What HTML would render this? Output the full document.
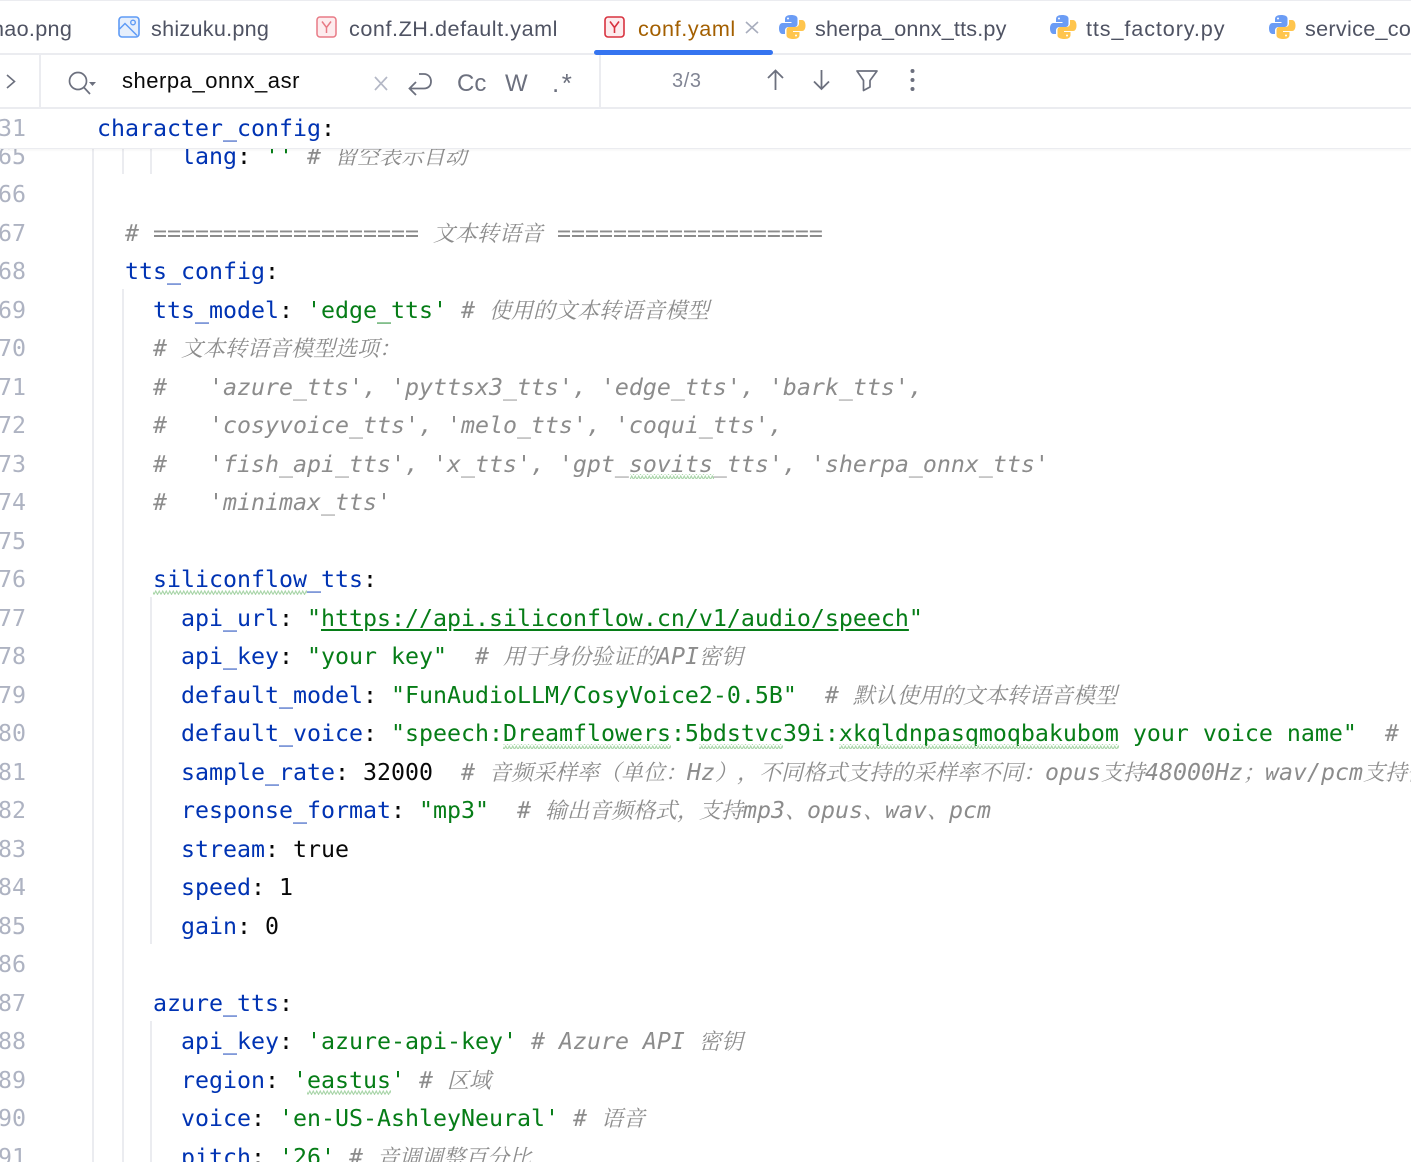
<!DOCTYPE html>
<html><head><meta charset="utf-8"><style>
html,body{margin:0;padding:0;background:#fff;width:1411px;height:1162px;overflow:hidden}
#p{position:relative;width:1411px;height:1162px;overflow:hidden;background:#fff}
.a{position:absolute}
.g{position:absolute;width:2px;background:#ebecf0}
#code{position:absolute;left:97px;top:137.9px;font:23.25px/38.5px "DejaVu Sans Mono","Liberation Mono",monospace;color:#080808}
#nums{position:absolute;left:-2px;top:137.9px;width:28px;text-align:right;font:23.25px/38.5px "DejaVu Sans Mono","Liberation Mono",monospace;color:#aeb3c2}
.l{height:38.5px;white-space:pre}
.k{color:#0033b3}.s{color:#067d17}
.c{color:#8c8c8c;font-style:italic}
.z{font-family:"Noto Serif CJK SC","Noto Sans CJK SC",serif;font-size:22px;line-height:0;font-style:italic;color:#8c8c8c;text-spacing-trim:space-all;font-kerning:none;font-feature-settings:"chws" 0,"palt" 0,"halt" 0,"kern" 0}
.t{position:absolute;top:14px;font:21.6px/30px "Liberation Sans",sans-serif;color:#4f5363;white-space:pre}
#hdr{position:absolute;left:0;top:0;width:1411px;height:148px;background:#fff;border-bottom:1px solid #ebecf0;box-shadow:0 1px 3px rgba(0,0,0,.05)}
</style></head><body><div id="p">
<div class="g" style="left:92px;top:148px;height:1014px"></div>
<div class="g" style="left:122px;top:148px;height:26px"></div>
<div class="g" style="left:150px;top:148px;height:26px"></div>
<div class="g" style="left:122px;top:289px;height:873px"></div>
<div class="g" style="left:150px;top:597px;height:347px"></div>
<div class="g" style="left:150px;top:1021px;height:141px"></div>

<div id="nums"><div class="l">65</div><div class="l">66</div><div class="l">67</div><div class="l">68</div><div class="l">69</div><div class="l">70</div><div class="l">71</div><div class="l">72</div><div class="l">73</div><div class="l">74</div><div class="l">75</div><div class="l">76</div><div class="l">77</div><div class="l">78</div><div class="l">79</div><div class="l">80</div><div class="l">81</div><div class="l">82</div><div class="l">83</div><div class="l">84</div><div class="l">85</div><div class="l">86</div><div class="l">87</div><div class="l">88</div><div class="l">89</div><div class="l">90</div><div class="l">91</div></div>

<div id="code">
<div class="l">      <span class="k">lang</span>: <span class="s">''</span> <span class="c"># </span><span class="z">留空表示自动</span></div>
<div class="l"> </div>
<div class="l">  <span class="c"># =================== </span><span class="z">文本转语音</span><span class="c"> ===================</span></div>
<div class="l">  <span class="k">tts_config</span>:</div>
<div class="l">    <span class="k">tts_model</span>: <span class="s">'edge_tts'</span> <span class="c"># </span><span class="z">使用的文本转语音模型</span></div>
<div class="l">    <span class="c"># </span><span class="z">文本转语音模型选项：</span></div>
<div class="l">    <span class="c">#   'azure_tts', 'pyttsx3_tts', 'edge_tts', 'bark_tts',</span></div>
<div class="l">    <span class="c">#   'cosyvoice_tts', 'melo_tts', 'coqui_tts',</span></div>
<div class="l">    <span class="c">#   'fish_api_tts', 'x_tts', 'gpt_sovits_tts', 'sherpa_onnx_tts'</span></div>
<div class="l">    <span class="c">#   'minimax_tts'</span></div>
<div class="l"> </div>
<div class="l">    <span class="k">siliconflow_tts</span>:</div>
<div class="l">      <span class="k">api_url</span>: <span class="s">"<span style="text-decoration:underline;text-underline-offset:3px">https://api.siliconflow.cn/v1/audio/speech</span>"</span></div>
<div class="l">      <span class="k">api_key</span>: <span class="s">"your key"</span>  <span class="c"># </span><span class="z">用于身份验证的</span><span class="c">API</span><span class="z">密钥</span></div>
<div class="l">      <span class="k">default_model</span>: <span class="s">"FunAudioLLM/CosyVoice2-0.5B"</span>  <span class="c"># </span><span class="z">默认使用的文本转语音模型</span></div>
<div class="l">      <span class="k">default_voice</span>: <span class="s">"speech:Dreamflowers:5bdstvc39i:xkqldnpasqmoqbakubom your voice name"</span>  <span class="c">#</span></div>
<div class="l">      <span class="k">sample_rate</span>: 32000  <span class="c"># </span><span class="z">音频采样率（单位：</span><span class="c">Hz</span><span class="z">），不同格式支持的采样率不同：</span><span class="c">opus</span><span class="z">支持</span><span class="c">48000Hz</span><span class="z">；</span><span class="c">wav/pcm</span><span class="z">支持任</span></div>
<div class="l">      <span class="k">response_format</span>: <span class="s">"mp3"</span>  <span class="c"># </span><span class="z">输出音频格式，支持</span><span class="c">mp3</span><span class="z">、</span><span class="c">opus</span><span class="z">、</span><span class="c">wav</span><span class="z">、</span><span class="c">pcm</span></div>
<div class="l">      <span class="k">stream</span>: true</div>
<div class="l">      <span class="k">speed</span>: 1</div>
<div class="l">      <span class="k">gain</span>: 0</div>
<div class="l"> </div>
<div class="l">    <span class="k">azure_tts</span>:</div>
<div class="l">      <span class="k">api_key</span>: <span class="s">'azure-api-key'</span> <span class="c"># Azure API </span><span class="z">密钥</span></div>
<div class="l">      <span class="k">region</span>: <span class="s">'eastus'</span> <span class="c"># </span><span class="z">区域</span></div>
<div class="l">      <span class="k">voice</span>: <span class="s">'en-US-AshleyNeural'</span> <span class="c"># </span><span class="z">语音</span></div>
<div class="l">      <span class="k">pitch</span>: <span class="s">'26'</span> <span class="c"># </span><span class="z">音调调整百分比</span></div>
</div>

<svg class="a" style="left:0;top:0" width="1411" height="1162" fill="none">
<defs><pattern id="w" width="7" height="5" patternUnits="userSpaceOnUse"><path d="M0 4.500L1.750 1L3.500 4.500L5.250 1L7 4.500" stroke="#a8d5a8" stroke-width="1.100"/></pattern></defs>
<rect x="630" y="474" width="84" height="5" fill="url(#w)"/>
<rect x="153" y="590" width="154" height="5" fill="url(#w)"/>
<rect x="503" y="744" width="168" height="5" fill="url(#w)"/>
<rect x="699" y="744" width="84" height="5" fill="url(#w)"/>
<rect x="839" y="744" width="280" height="5" fill="url(#w)"/>
<rect x="307" y="1090" width="84" height="5" fill="url(#w)"/>
</svg>

<div id="hdr">
<div class="a" style="left:0;top:0;width:1411px;height:1px;background:#ebecf0"></div>
<div class="a" style="left:0;top:53px;width:1411px;height:2px;background:#ebecf0"></div>
<div class="a" style="left:0;top:107px;width:1411px;height:2px;background:#ebecf0"></div>
<div class="a" style="left:39px;top:54px;width:2px;height:54px;background:#ebecf0"></div>
<div class="a" style="left:599px;top:54px;width:2px;height:54px;background:#ebecf0"></div>
<div class="a" style="left:594px;top:50px;width:179px;height:5px;border-radius:3px;background:#3574f0"></div>

<div class="t" style="left:-8px;letter-spacing:.3px">hao.png</div>
<div class="t" style="left:151px;letter-spacing:.27px">shizuku.png</div>
<div class="t" style="left:349px;letter-spacing:.55px">conf.ZH.default.yaml</div>
<div class="t" style="left:638px;color:#a35f00;letter-spacing:.6px">conf.yaml</div>
<div class="t" style="left:815px;letter-spacing:.17px">sherpa_onnx_tts.py</div>
<div class="t" style="left:1086px;letter-spacing:.9px">tts_factory.py</div>
<div class="t" style="left:1305px;letter-spacing:.3px">service_config.py</div>

<svg class="a" style="left:0;top:0" width="1411" height="108" fill="none">
<!-- image icon -->
<rect x="119" y="17" width="20" height="20" rx="3" fill="#e6effc" stroke="#5f9bf5" stroke-width="1.6"/>
<circle cx="133" cy="22.5" r="2.3" stroke="#5f9bf5" stroke-width="1.4"/>
<path d="M119.5 29L125 23.5L137 35.5" stroke="#5f9bf5" stroke-width="1.5"/>
<!-- yaml icons -->
<rect x="317" y="17" width="19" height="20" rx="3" fill="#fdecee" stroke="#e87a85" stroke-width="1.5"/>
<path d="M322 21.5L326.5 27.5L331 21.5M326.5 27.5V33" stroke="#e87a85" stroke-width="1.5"/>
<rect x="605" y="17" width="19" height="20" rx="3" fill="#fdecee" stroke="#d8323f" stroke-width="1.6"/>
<path d="M610 21.5L614.5 27.5L619 21.5M614.5 27.5V33" stroke="#d8323f" stroke-width="1.6"/>
<!-- close -->
<path d="M746 22L758 33M758 22L746 33" stroke="#a8adbd" stroke-width="1.6"/>
<!-- python icons -->
<g id="py"><path d="M791 15c-4 0-6 1.600-6 4v3h6.500v1H782.500c-2.500 0-3.500 2.500-3.500 5.500s1.200 5.500 3.500 5.500H785v-3.500c0-2 1.500-3.500 3.500-3.500h6c1.800 0 3-1.300 3-3v-5.500c0-2.200-2.500-3.500-6.500-3.500z" fill="#6b9cf5"/><path d="M793.500 39c4 0 6-1.600 6-4v-3H793v-1h9c2.500 0 3.500-2.500 3.500-5.500S804.300 20 802 20h-3v3.500c0 2-1.500 3.500-3.500 3.500h-6c-1.800 0-3 1.300-3 3v5.500c0 2.200 3 3.500 7 3.500z" fill="#ffc54d"/><circle cx="788" cy="18.500" r="1" fill="#fff"/><circle cx="796" cy="35.500" r="1" fill="#fff"/></g>
<use href="#py" x="271"/>
<use href="#py" x="490"/>
<!-- chevron -->
<path d="M7 75L14.500 81.500L7 88" stroke="#6c707e" stroke-width="1.6"/>
<!-- search -->
<circle cx="78" cy="81" r="8.500" stroke="#6c707e" stroke-width="1.7"/>
<path d="M84 87.500L90 94" stroke="#6c707e" stroke-width="1.7"/>
<path d="M89 82h7l-3.500 4z" fill="#6c707e"/>
<!-- clear -->
<path d="M375 77L387 90M387 77L375 90" stroke="#b4b8c6" stroke-width="1.7"/>
<!-- wrap -->
<path d="M419 74H424C428 74 431 77 431 81.500C431 86 428 88.500 424 88.500H410M416 82L409.500 88.500L416 95" stroke="#6c707e" stroke-width="1.8"/>
<!-- nav icons -->
<path d="M775.500 90V71M768 78L775.500 70.500L783 78" stroke="#6c707e" stroke-width="1.8"/>
<path d="M821.500 70V89M814 81.500L821.500 89L829 81.500" stroke="#6c707e" stroke-width="1.8"/>
<path d="M857 71H877L870 80.500V87L863.500 90.500V80.500Z" stroke="#6c707e" stroke-width="1.7" stroke-linejoin="round"/>
<circle cx="912.500" cy="71" r="2" fill="#6c707e"/><circle cx="912.500" cy="80" r="2" fill="#6c707e"/><circle cx="912.500" cy="89" r="2" fill="#6c707e"/>
</svg>

<div class="a" style="left:122px;top:66px;font:22px/30px 'Liberation Sans',sans-serif;letter-spacing:.53px;color:#0a0a0a;white-space:pre">sherpa_onnx_asr</div>
<div class="a" style="left:457px;top:69px;font:24px/30px 'Liberation Sans',sans-serif;color:#6c707e;white-space:pre">Cc</div>
<div class="a" style="left:505px;top:69px;font:24px/30px 'Liberation Sans',sans-serif;color:#6c707e;white-space:pre">W</div>
<div class="a" style="left:552px;top:68px;font:26px/30px 'Liberation Sans',sans-serif;letter-spacing:2.500px;color:#6c707e;white-space:pre">.*</div>
<div class="a" style="left:672px;top:66px;font:20px/30px 'Liberation Sans',sans-serif;letter-spacing:.6px;color:#818594;white-space:pre">3/3</div>
<div class="a" style="left:97px;top:110px;font:23.25px/38px 'DejaVu Sans Mono','Liberation Mono',monospace;color:#080808;white-space:pre"><span class="k">character_config</span>:</div>
<div class="a" style="left:-2px;top:110px;width:28px;text-align:right;font:23.25px/38px 'DejaVu Sans Mono','Liberation Mono',monospace;color:#aeb3c2;white-space:pre">31</div>
</div>
</div></body></html>
